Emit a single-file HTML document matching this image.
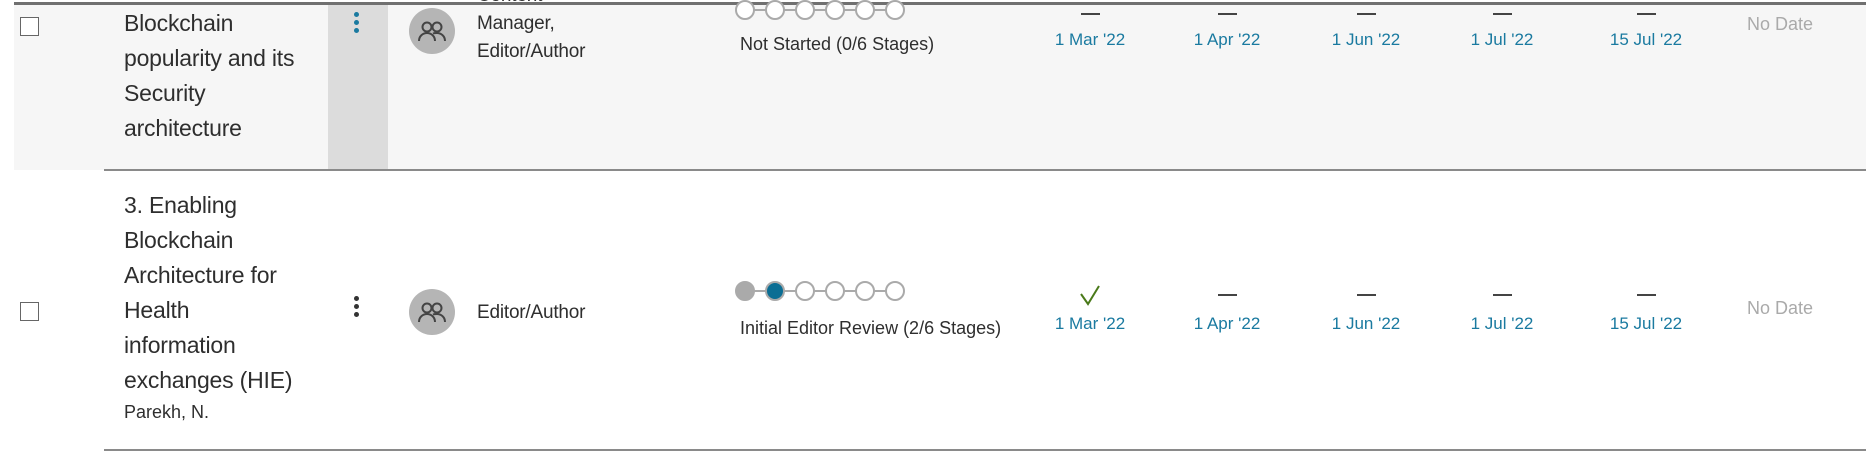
<!DOCTYPE html>
<html><head><meta charset="utf-8"><style>
body{margin:0;width:1866px;height:451px;overflow:hidden;background:#fff;font-family:"Liberation Sans",sans-serif;color:#2e2e2e;position:relative}
.a{position:absolute}
.cb{position:absolute;left:20px;width:17px;height:17px;border:1.5px solid #666;background:#fff}
.title{position:absolute;left:124px;font-size:23px;line-height:35px;color:#2e2e2e;letter-spacing:-0.2px}
.role{position:absolute;left:477px;font-size:19px;line-height:28px;letter-spacing:-0.2px}
.av{position:absolute;left:409px;width:46px;height:46px;border-radius:50%;background:#b5b5b5}
.dash{position:absolute;width:19px;height:2px;background:#444}
.dt{position:absolute;font-size:17px;color:#1a7aa0;width:120px;text-align:center}
.nd{position:absolute;font-size:18px;color:#aaa;width:120px;text-align:center}
.kd{position:absolute;width:5px;height:5px;border-radius:50%}
</style></head><body>
<div class="a" style="left:14px;top:4px;width:1852px;height:166px;background:#f6f6f6"></div>
<div class="a" style="left:328px;top:4px;width:60px;height:166px;background:#dcdcdc"></div>
<div class="a" style="left:14px;top:2px;width:1852px;height:3px;background:#707070"></div>
<div class="a" style="left:104px;top:169px;width:1762px;height:2px;background:#8a8a8a"></div>
<div class="a" style="left:104px;top:449px;width:1762px;height:2px;background:#8a8a8a"></div>

<!-- row 1 -->
<div class="cb" style="top:17px"></div>
<div class="title" style="top:6px">Blockchain<br>popularity and its<br>Security<br>architecture</div>
<div class="kd" style="left:354px;top:12px;background:#1a7aa0"></div>
<div class="kd" style="left:354px;top:20px;background:#1a7aa0"></div>
<div class="kd" style="left:354px;top:28px;background:#1a7aa0"></div>
<div class="av" style="top:8px"><svg width="46" height="46" viewBox="0 0 46 46" fill="none" stroke="#444" stroke-width="2"><circle cx="18" cy="19" r="4.5"/><circle cx="28" cy="19" r="4.5"/><path d="M10 33c0-5 4-8 8-8s8 3 8 8M24 25.5c1-.4 2.5-.5 4-.5 4 0 8 3 8 8"/></svg></div>
<div class="role" style="top:-18px">Content<br>Manager,<br>Editor/Author</div>
<svg class="a" style="left:735px;top:0px" width="180" height="22"><g stroke="#aaa" stroke-width="2" fill="#fff"><line x1="10" y1="10" x2="166" y2="10"/><circle cx="10" cy="10" r="9"/><circle cx="40" cy="10" r="9"/><circle cx="70" cy="10" r="9"/><circle cx="100" cy="10" r="9"/><circle cx="130" cy="10" r="9"/><circle cx="160" cy="10" r="9"/></g></svg>
<div class="a" style="left:740px;top:34px;font-size:18px">Not Started (0/6 Stages)</div>
<div class="dash" style="left:1081px;top:13px"></div>
<div class="dash" style="left:1218px;top:13px"></div>
<div class="dash" style="left:1357px;top:13px"></div>
<div class="dash" style="left:1493px;top:13px"></div>
<div class="dash" style="left:1637px;top:13px"></div>
<div class="dt" style="left:1030px;top:30px">1 Mar '22</div>
<div class="dt" style="left:1167px;top:30px">1 Apr '22</div>
<div class="dt" style="left:1306px;top:30px">1 Jun '22</div>
<div class="dt" style="left:1442px;top:30px">1 Jul '22</div>
<div class="dt" style="left:1586px;top:30px">15 Jul '22</div>
<div class="nd" style="left:1720px;top:14px">No Date</div>

<!-- row 2 -->
<div class="cb" style="top:302px"></div>
<div class="title" style="top:188px">3. Enabling<br>Blockchain<br>Architecture for<br>Health<br>information<br>exchanges (HIE)</div>
<div class="a" style="left:124px;top:402px;font-size:18px">Parekh, N.</div>
<div class="kd" style="left:354px;top:296px;background:#333"></div>
<div class="kd" style="left:354px;top:304px;background:#333"></div>
<div class="kd" style="left:354px;top:312px;background:#333"></div>
<div class="av" style="top:289px"><svg width="46" height="46" viewBox="0 0 46 46" fill="none" stroke="#444" stroke-width="2"><circle cx="18" cy="19" r="4.5"/><circle cx="28" cy="19" r="4.5"/><path d="M10 33c0-5 4-8 8-8s8 3 8 8M24 25.5c1-.4 2.5-.5 4-.5 4 0 8 3 8 8"/></svg></div>
<div class="role" style="top:299px">Editor/Author</div>
<svg class="a" style="left:735px;top:281px" width="180" height="22"><g stroke="#aaa" stroke-width="2" fill="#fff"><line x1="10" y1="10" x2="166" y2="10"/><circle cx="10" cy="10" r="9" fill="#aaa"/><circle cx="40" cy="10" r="9" fill="#0b6e94"/><circle cx="70" cy="10" r="9"/><circle cx="100" cy="10" r="9"/><circle cx="130" cy="10" r="9"/><circle cx="160" cy="10" r="9"/></g></svg>
<div class="a" style="left:740px;top:318px;font-size:18px">Initial Editor Review (2/6 Stages)</div>
<svg class="a" style="left:1078px;top:284px" width="24" height="22"><path d="M3 10l7 10L21 2" fill="none" stroke="#4a7a1a" stroke-width="2"/></svg>
<div class="dash" style="left:1218px;top:294px"></div>
<div class="dash" style="left:1357px;top:294px"></div>
<div class="dash" style="left:1493px;top:294px"></div>
<div class="dash" style="left:1637px;top:294px"></div>
<div class="dt" style="left:1030px;top:314px">1 Mar '22</div>
<div class="dt" style="left:1167px;top:314px">1 Apr '22</div>
<div class="dt" style="left:1306px;top:314px">1 Jun '22</div>
<div class="dt" style="left:1442px;top:314px">1 Jul '22</div>
<div class="dt" style="left:1586px;top:314px">15 Jul '22</div>
<div class="nd" style="left:1720px;top:298px">No Date</div>
</body></html>
